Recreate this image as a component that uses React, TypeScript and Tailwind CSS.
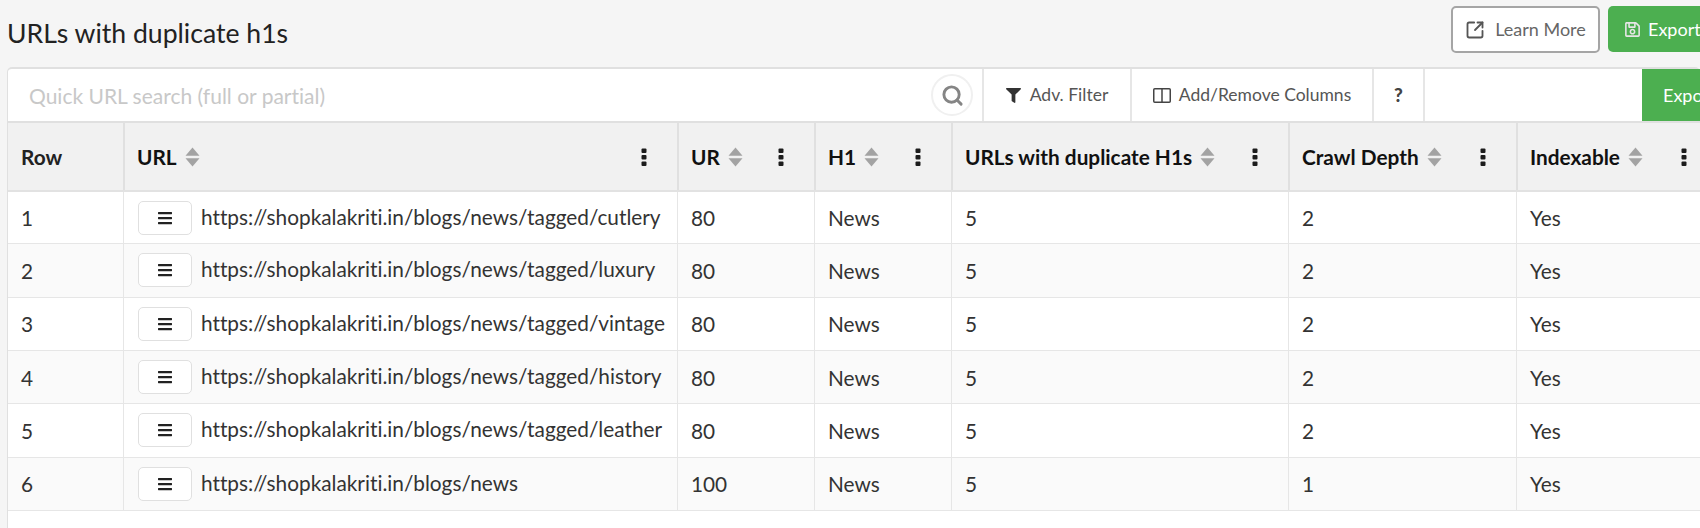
import { FaFilter, FaRegSave, FaBars } from "react-icons/fa";
import { SquareArrowOutUpRight, Search } from "lucide-react";

const cols = "grid grid-cols-[115px_554px_137px_137px_337px_228px_201px]";
const rows = [
  ["1", "https://shopkalakriti.in/blogs/news/tagged/cutlery", "80", "2"],
  ["2", "https://shopkalakriti.in/blogs/news/tagged/luxury", "80", "2"],
  ["3", "https://shopkalakriti.in/blogs/news/tagged/vintage", "80", "2"],
  ["4", "https://shopkalakriti.in/blogs/news/tagged/history", "80", "2"],
  ["5", "https://shopkalakriti.in/blogs/news/tagged/leather", "80", "2"],
  ["6", "https://shopkalakriti.in/blogs/news", "100", "1"],
];

function SortIcon() {
  return (
    <svg width="15" height="20" viewBox="0 0 15 20" className="shrink-0" fill="#a3a3a3">
      <path d="M7.5 0.5 L14.5 8.8 H0.5 Z" />
      <path d="M7.5 19.5 L14.5 11.2 H0.5 Z" />
    </svg>
  );
}

function Dots() {
  return (
    <svg width="6" height="18" viewBox="0 0 6 18" className="shrink-0" fill="#1c1c1c">
      <rect x="0.5" y="0.5" width="5" height="4.5" rx="1" />
      <rect x="0.5" y="7" width="5" height="4.5" rx="1" />
      <rect x="0.5" y="13.5" width="5" height="4.5" rx="1" />
    </svg>
  );
}

function Head({ label }: { label: string }) {
  return (
    <div className="flex items-center justify-between border-l-2 border-[#e0e0e0] bg-[#f1f1f1] pl-[12px] pr-[30px]">
      <span className="flex items-center gap-[8px]">
        <span className="whitespace-nowrap text-[20.8px] font-bold text-[#111]">{label}</span>
        <SortIcon />
      </span>
      <Dots />
    </div>
  );
}

export default function App() {
  return (
    <div className="h-[528px] w-[1700px] overflow-hidden bg-[#f5f5f5] font-['Lato',sans-serif] text-[#333] [font-variant-ligatures:none]">
      <div className="flex h-[67px] items-start justify-between pl-[7px]">
        <h1 className="mt-[15px] text-[26.6px] leading-[36px] text-[#222]">URLs with duplicate h1s</h1>
        <div className="-mr-[2px] mt-[6px] flex gap-[8px]">
          <button className="flex h-[47px] w-[149px] items-center justify-center gap-[10px] rounded-[5px] border-2 border-[#a5a5a5] bg-white text-[18px] text-[#666]">
            <SquareArrowOutUpRight size={20} strokeWidth={2.2} className="text-[#555]" />
            Learn More
          </button>
          <button className="flex h-[46px] w-[94px] items-center gap-[7px] rounded-l-[5px] bg-[#4caf50] pl-[16px] text-[18px] text-white">
            <FaRegSave className="text-[17px] text-[#e6e6e6]" />
            Export
          </button>
        </div>
      </div>
      <div className="ml-[7px] h-[461px] rounded-t-[5px] border-l border-t-2 border-[#e0e0e0] bg-white">
        <div className="flex h-[54px] border-b-2 border-[#e0e0e0]">
          <div className="flex flex-1 items-center justify-between pl-[21px] pr-[9px]">
            <span className="pt-[2px] text-[21px] text-[#c8c8c8]">Quick URL search (full or partial)</span>
            <span className="flex h-[42px] w-[42px] items-center justify-center rounded-full border-2 border-[#f0f0f0]">
              <Search size={23} strokeWidth={3} className="text-[#858585]" />
            </span>
          </div>
          <div className="flex w-[148px] items-center justify-center gap-[9px] border-l-2 border-[#e6e6e6] text-[17.5px] text-[#555]">
            <FaFilter className="text-[15px] text-[#333]" />
            <span className="pt-[1px]">Adv. Filter</span>
          </div>
          <div className="flex w-[242px] items-center justify-center gap-[8px] border-l-2 border-[#e6e6e6] text-[17.5px] text-[#555]">
            <svg width="18" height="15" viewBox="0 0 18 15" fill="none" stroke="#444" strokeWidth="1.5">
              <rect x="0.75" y="0.75" width="16.5" height="13.5" rx="1" />
              <path d="M9 1V14" />
            </svg>
            <span className="pt-[1px]">Add/Remove Columns</span>
          </div>
          <div className="flex w-[53px] items-center justify-center border-x-2 border-[#e6e6e6] text-[19px] font-black text-[#444]">?</div>
          <div className="w-[217px]" />
          <div className="flex w-[58px] items-center overflow-hidden whitespace-nowrap bg-[#4caf50] pl-[21px] text-[18px] text-white">Export</div>
        </div>
        <div className={`${cols} h-[69px] border-b-2 border-[#e2e2e2]`}>
          <div className="flex items-center bg-[#f1f1f1] pl-[13px] text-[20.8px] font-bold text-[#222]">Row</div>
          <Head label="URL" />
          <Head label="UR" />
          <Head label="H1" />
          <Head label="URLs with duplicate H1s" />
          <Head label="Crawl Depth" />
          <Head label="Indexable" />
        </div>
        {rows.map((r, i) => (
          <div key={r[0]} className={`${cols} ${i === 0 ? "h-[52.33px]" : "h-[53.33px]"} border-b border-[#e6e6e6] text-[20.8px] ${i % 2 ? "bg-[#fafafa]" : "bg-white"}`}>
            <div className="flex items-center pl-[13px]">{r[0]}</div>
            <div className="flex items-center gap-[9px] border-l border-[#e6e6e6] pl-[14px]">
              <span className="flex h-[34px] w-[54px] shrink-0 items-center justify-center rounded-[5px] border border-[#e0e0e0] bg-white">
                <FaBars className="text-[16px] text-[#222]" />
              </span>
              <span className="-mt-[3px] whitespace-nowrap">{r[1]}</span>
            </div>
            <div className="flex items-center border-l border-[#e6e6e6] pl-[13px]">{r[2]}</div>
            <div className="flex items-center border-l border-[#e6e6e6] pl-[13px]">News</div>
            <div className="flex items-center border-l border-[#e6e6e6] pl-[13px]">5</div>
            <div className="flex items-center border-l border-[#e6e6e6] pl-[13px]">{r[3]}</div>
            <div className="flex items-center border-l border-[#e6e6e6] pl-[13px]">Yes</div>
          </div>
        ))}
      </div>
    </div>
  );
}
